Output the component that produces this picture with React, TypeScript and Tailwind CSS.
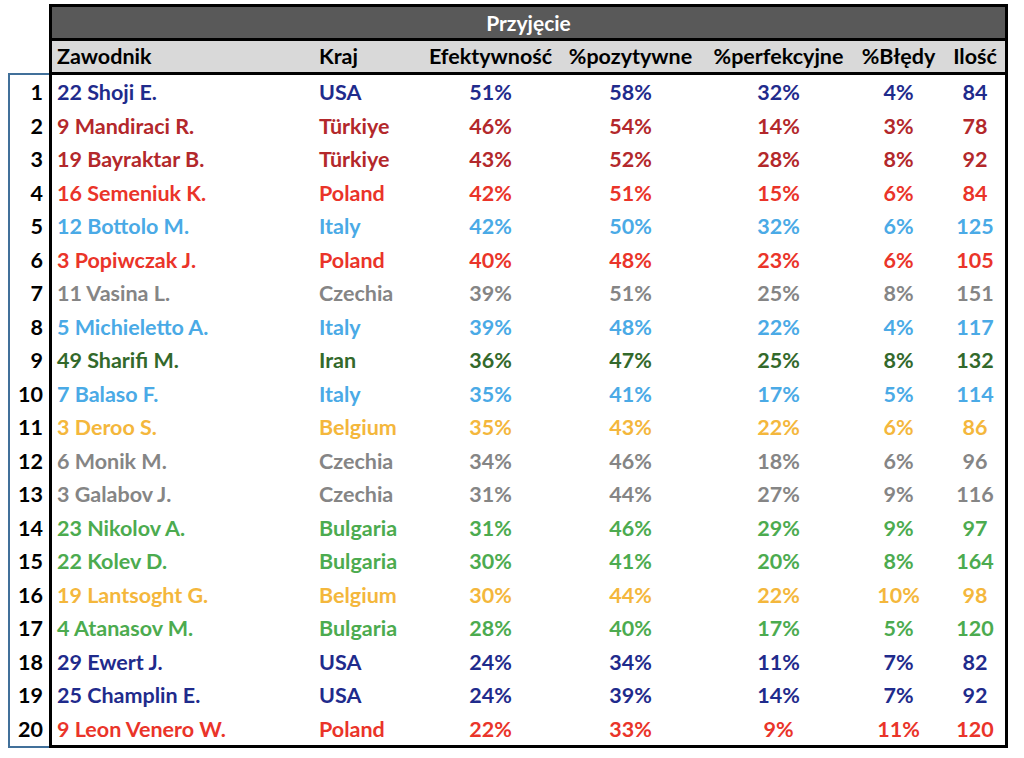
const colors: Record<string, string> = {
  USA: "text-[#1f2b8c]",
  Türkiye: "text-[#b3282b]",
  Poland: "text-[#ea3429]",
  Italy: "text-[#4aaae6]",
  Czechia: "text-[#858585]",
  Iran: "text-[#33692b]",
  Belgium: "text-[#f4b73c]",
  Bulgaria: "text-[#4cab4f]",
}

const rows: [string, string, number, number, number, number, number][] = [
  ["22 Shoji E.", "USA", 51, 58, 32, 4, 84],
  ["9 Mandiraci R.", "Türkiye", 46, 54, 14, 3, 78],
  ["19 Bayraktar B.", "Türkiye", 43, 52, 28, 8, 92],
  ["16 Semeniuk K.", "Poland", 42, 51, 15, 6, 84],
  ["12 Bottolo M.", "Italy", 42, 50, 32, 6, 125],
  ["3 Popiwczak J.", "Poland", 40, 48, 23, 6, 105],
  ["11 Vasina L.", "Czechia", 39, 51, 25, 8, 151],
  ["5 Michieletto A.", "Italy", 39, 48, 22, 4, 117],
  ["49 Sharifi M.", "Iran", 36, 47, 25, 8, 132],
  ["7 Balaso F.", "Italy", 35, 41, 17, 5, 114],
  ["3 Deroo S.", "Belgium", 35, 43, 22, 6, 86],
  ["6 Monik M.", "Czechia", 34, 46, 18, 6, 96],
  ["3 Galabov J.", "Czechia", 31, 44, 27, 9, 116],
  ["23 Nikolov A.", "Bulgaria", 31, 46, 29, 9, 97],
  ["22 Kolev D.", "Bulgaria", 30, 41, 20, 8, 164],
  ["19 Lantsoght G.", "Belgium", 30, 44, 22, 10, 98],
  ["4 Atanasov M.", "Bulgaria", 28, 40, 17, 5, 120],
  ["29 Ewert J.", "USA", 24, 34, 11, 7, 82],
  ["25 Champlin E.", "USA", 24, 39, 14, 7, 92],
  ["9 Leon Venero W.", "Poland", 22, 33, 9, 11, 120],
]

const cols = "grid grid-cols-[263px_110px_131px_149px_147px_93px_60px]"

export default function App() {
  return (
    <div className="w-[1024px] h-[758px] bg-white pt-[4px] font-['Lato',sans-serif] font-bold text-[21.5px] leading-none">
      <div className="flex items-stretch">
        <div className="flex flex-col w-[41px] ml-[8px]">
          <div className="h-[69px]" />
          <div className="flex-1 border-2 border-r-0 border-[#41709a] flex flex-col">
            {rows.map((_, i) => (
              <div key={i} className="h-[33.5px] flex items-center justify-end pr-[6px] pt-[2px] text-black">
                {i + 1}
              </div>
            ))}
          </div>
        </div>
        <div className="w-[959px] border-[3px] border-black">
          <div className="h-[31px] bg-[#595959] flex items-center justify-center text-white text-[21px]">
            Przyjęcie
          </div>
          <div className={`${cols} h-[37px] bg-[#d9d9d9] border-y-[3px] border-black items-center text-black`}>
            <div className="pl-[5px]">Zawodnik</div>
            <div className="pl-[4px]">Kraj</div>
            <div className="text-center">Efektywność</div>
            <div className="text-center">%pozytywne</div>
            <div className="text-center">%perfekcyjne</div>
            <div className="text-center">%Błędy</div>
            <div className="text-center">Ilość</div>
          </div>
          {rows.map(([name, country, ef, poz, perf, bl, il]) => (
            <div key={name} className={`${cols} h-[33.5px] pt-[2px] items-center ${colors[country]}`}>
              <div className="pl-[5px]">{name}</div>
              <div className="pl-[4px]">{country}</div>
              <div className="text-center">{ef}%</div>
              <div className="text-center">{poz}%</div>
              <div className="text-center">{perf}%</div>
              <div className="text-center">{bl}%</div>
              <div className="text-center">{il}</div>
            </div>
          ))}
        </div>
      </div>
    </div>
  )
}
